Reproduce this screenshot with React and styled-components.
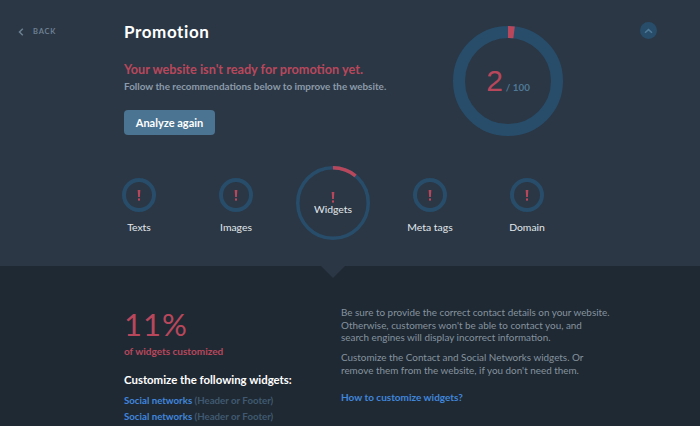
import React from 'react';
import styled, { createGlobalStyle } from 'styled-components';

const Global = createGlobalStyle`
  html, body { margin: 0; padding: 0; height: 100%; overflow: hidden; background: #1f2933; }
  body { font-family: 'Lato', 'Liberation Sans', sans-serif; -webkit-font-smoothing: antialiased; }
`;

const Page = styled.div`
  width: 700px;
  height: 426px;
  overflow: hidden;
`;

const Top = styled.section`
  position: relative;
  height: 266px;
  box-sizing: border-box;
  background: #2b3744;
  padding-top: 22px;
`;

const Hero = styled.div`
  display: flex;
  align-items: flex-start;
  height: 131px;
`;

const Back = styled.a`
  width: 124px;
  box-sizing: border-box;
  padding: 4px 0 0 18px;
  display: flex;
  align-items: center;
  gap: 9px;
  color: #6b7f92;
  font-size: 7.5px;
  font-weight: 700;
  letter-spacing: 0.8px;
  line-height: 12px;
`;

const Intro = styled.div`
  width: 329px;
`;

const Title = styled.h1`
  margin: 0;
  color: #fff;
  font-size: 17px;
  font-weight: 700;
  letter-spacing: 0.6px;
  line-height: 20px;
`;

const Warning = styled.div`
  margin-top: 19px;
  color: #b9475c;
  font-size: 12.7px;
  font-weight: 700;
  line-height: 17px;
`;

const Hint = styled.div`
  margin-top: 0;
  color: #8c9baa;
  font-size: 9.9px;
  font-weight: 700;
  line-height: 16px;
`;

const Analyze = styled.button`
  display: block;
  margin-top: 16px;
  width: 91px;
  height: 25px;
  padding: 0;
  border: 0;
  border-radius: 4px;
  background: #4a7492;
  color: #fff;
  font: 700 11px 'Lato', sans-serif;
`;

const Score = styled.div`
  position: relative;
  width: 110px;
  height: 110px;
  margin: 4px 0 0 0;
`;

const ScoreText = styled.div`
  position: absolute;
  inset: 0;
  display: flex;
  align-items: baseline;
  justify-content: center;
  padding-top: 37px;
  box-sizing: border-box;
`;

const ScoreValue = styled.span`
  color: #b9475c;
  font-family: 'Liberation Sans', sans-serif;
  font-size: 30px;
  line-height: 36px;
`;

const ScoreMax = styled.span`
  margin-left: 3px;
  color: #4f7997;
  font-size: 9.8px;
  font-weight: 700;
`;

const Collapse = styled.div`
  margin: 0 0 0 77px;
  width: 17px;
  height: 17px;
  border-radius: 50%;
  background: #274d6b;
  display: flex;
  align-items: center;
  justify-content: center;
`;

const Steps = styled.div`
  display: grid;
  grid-template-columns: repeat(5, 97px);
  margin: 24px 0 0 90.5px;
`;

const Step = styled.div`
  height: 76px;
  display: flex;
  flex-direction: column;
  align-items: center;
  color: #e2e7ec;
  font-size: 10.4px;
  font-weight: 400;
  line-height: 14px;
`;

const Dial = styled.div`
  position: relative;
  width: 34px;
  height: 34px;
  margin: 1px 0 8px;
`;

const MarkIcon = styled.svg`
  position: absolute;
  left: 50%;
  top: ${p => p.$top}px;
  margin-left: -2px;
`;

const BigDial = styled.div`
  position: relative;
  width: 74px;
  height: 74px;
  margin-top: -11px;
`;

const BigLabel = styled.span`
  position: absolute;
  left: 0;
  right: 0;
  top: 36px;
  text-align: center;
  color: #e2e7ec;
`;

const Pointer = styled.div`
  position: absolute;
  left: 321px;
  bottom: -12px;
  width: 0;
  height: 0;
  border-left: 12px solid transparent;
  border-right: 12px solid transparent;
  border-top: 12px solid #2b3744;
  z-index: 1;
`;

const Bottom = styled.section`
  height: 160px;
  background: #1f2933;
  display: flex;
  padding-left: 124px;
`;

const LeftCol = styled.div`
  width: 217px;
  padding-top: 40px;
`;

const Percent = styled.div`
  color: #b9475c;
  font-size: 31px;
  font-weight: 400;
  letter-spacing: 1px;
  line-height: 36px;
`;

const PercentNote = styled.div`
  margin-top: 2px;
  color: #b9475c;
  font-size: 10px;
  font-weight: 700;
  line-height: 14px;
`;

const ListTitle = styled.div`
  margin-top: 14px;
  color: #fff;
  font-size: 11.4px;
  font-weight: 700;
  line-height: 16px;
`;

const List = styled.div`
  margin-top: 4px;
  font-size: 9.7px;
  line-height: 16px;
`;

const ListRow = styled.div`
  color: #3f5a70;
  font-weight: 700;
`;

const Link = styled.a`
  color: #3f86dc;
  font-weight: 700;
`;

const RightCol = styled.div`
  padding-top: 40px;
  color: #85939f;
  font-size: 9.9px;
  font-weight: 400;
  line-height: 12.5px;
`;

const Para = styled.p`
  margin: 0 0 7.5px;
`;

const HowTo = styled(Link)`
  display: block;
  margin-top: 15px;
  font-size: 10px;
`;

const Ring = ({ size, stroke, progress }) => {
  const r = (size - stroke) / 2;
  const c = 2 * Math.PI * r;
  return (
    <svg width={size} height={size} viewBox={`0 0 ${size} ${size}`} style={{ display: 'block' }}>
      <circle cx={size / 2} cy={size / 2} r={r} fill="none" stroke="#274d6b" strokeWidth={stroke} />
      {progress > 0 && (
        <circle
          cx={size / 2}
          cy={size / 2}
          r={r}
          fill="none"
          stroke="#b9475c"
          strokeWidth={stroke}
          strokeDasharray={`${c * progress} ${c}`}
          transform={`rotate(-90 ${size / 2} ${size / 2})`}
        />
      )}
    </svg>
  );
};

const Mark = ({ top }) => (
  <MarkIcon $top={top} width="4" height="11" viewBox="0 0 4 11">
    <path d="M0.7 0 H3.3 L2.9 7 H1.1 Z" fill="#b9475c" />
    <rect x="1" y="8.4" width="2" height="2.2" fill="#b9475c" />
  </MarkIcon>
);

const steps = ['Texts', 'Images', 'Widgets', 'Meta tags', 'Domain'];

export default function App() {
  return (
    <Page>
      <Global />
      <Top>
        <Hero>
          <Back>
            <svg width="6" height="8" viewBox="0 0 6 8">
              <path d="M4.8 0.8 L1.5 4 L4.8 7.2" fill="none" stroke="#6b7f92" strokeWidth="1.5" />
            </svg>
            BACK
          </Back>
          <Intro>
            <Title>Promotion</Title>
            <Warning>Your website isn't ready for promotion yet.</Warning>
            <Hint>Follow the recommendations below to improve the website.</Hint>
            <Analyze>Analyze again</Analyze>
          </Intro>
          <Score>
            <Ring size={110} stroke={12} progress={0.02} />
            <ScoreText>
              <ScoreValue>2</ScoreValue>
              <ScoreMax>/ 100</ScoreMax>
            </ScoreText>
          </Score>
          <Collapse>
            <svg width="9" height="6" viewBox="0 0 9 6">
              <path d="M1 4.8 L4.5 1.6 L8 4.8" fill="none" stroke="#4f7997" strokeWidth="1.5" />
            </svg>
          </Collapse>
        </Hero>
        <Steps>
          {steps.map(name =>
            name === 'Widgets' ? (
              <Step key={name}>
                <BigDial>
                  <Ring size={74} stroke={3.5} progress={0.11} />
                  <Mark top={26} />
                  <BigLabel>{name}</BigLabel>
                </BigDial>
              </Step>
            ) : (
              <Step key={name}>
                <Dial>
                  <Ring size={34} stroke={4} progress={0} />
                  <Mark top={12} />
                </Dial>
                {name}
              </Step>
            )
          )}
        </Steps>
        <Pointer />
      </Top>
      <Bottom>
        <LeftCol>
          <Percent>11%</Percent>
          <PercentNote>of widgets customized</PercentNote>
          <ListTitle>Customize the following widgets:</ListTitle>
          <List>
            <ListRow><Link>Social networks</Link> (Header or Footer)</ListRow>
            <ListRow><Link>Social networks</Link> (Header or Footer)</ListRow>
          </List>
        </LeftCol>
        <RightCol>
          <Para>
            Be sure to provide the correct contact details on your website.<br />
            Otherwise, customers won't be able to contact you, and<br />
            search engines will display incorrect information.
          </Para>
          <Para>
            Customize the Contact and Social Networks widgets. Or<br />
            remove them from the website, if you don't need them.
          </Para>
          <HowTo>How to customize widgets?</HowTo>
        </RightCol>
      </Bottom>
    </Page>
  );
}
